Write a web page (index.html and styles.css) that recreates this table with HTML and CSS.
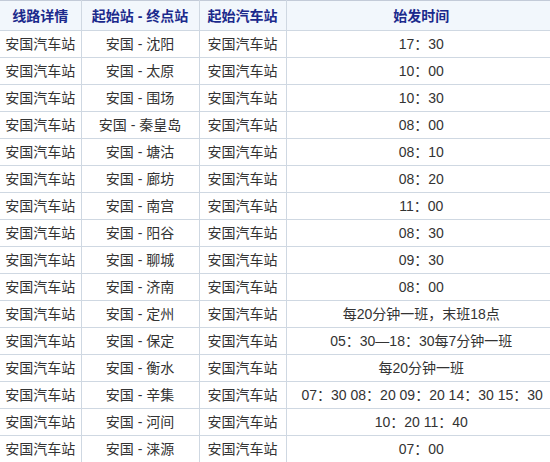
FILE: index.html
```html
<!DOCTYPE html>
<html lang="zh-CN">
<head>
<meta charset="utf-8">
<title>线路详情</title>
<link rel="stylesheet" href="styles.css">
</head>
<body>
<table class="lines">
  <colgroup>
    <col class="c1"><col class="c2"><col class="c3"><col class="c4">
  </colgroup>
  <thead>
    <tr><th>线路详情</th><th>起始站 - 终点站</th><th>起始汽车站</th><th class="time">始发时间</th></tr>
  </thead>
  <tbody>
    <tr><td>安国汽车站</td><td>安国 - 沈阳</td><td>安国汽车站</td><td class="time">17：30</td></tr>
    <tr><td>安国汽车站</td><td>安国 - 太原</td><td>安国汽车站</td><td class="time">10：00</td></tr>
    <tr><td>安国汽车站</td><td>安国 - 围场</td><td>安国汽车站</td><td class="time">10：30</td></tr>
    <tr><td>安国汽车站</td><td>安国 - 秦皇岛</td><td>安国汽车站</td><td class="time">08：00</td></tr>
    <tr><td>安国汽车站</td><td>安国 - 塘沽</td><td>安国汽车站</td><td class="time">08：10</td></tr>
    <tr><td>安国汽车站</td><td>安国 - 廊坊</td><td>安国汽车站</td><td class="time">08：20</td></tr>
    <tr><td>安国汽车站</td><td>安国 - 南宫</td><td>安国汽车站</td><td class="time">11：00</td></tr>
    <tr><td>安国汽车站</td><td>安国 - 阳谷</td><td>安国汽车站</td><td class="time">08：30</td></tr>
    <tr><td>安国汽车站</td><td>安国 - 聊城</td><td>安国汽车站</td><td class="time">09：30</td></tr>
    <tr><td>安国汽车站</td><td>安国 - 济南</td><td>安国汽车站</td><td class="time">08：00</td></tr>
    <tr><td>安国汽车站</td><td>安国 - 定州</td><td>安国汽车站</td><td class="time">每20分钟一班，末班18点</td></tr>
    <tr><td>安国汽车站</td><td>安国 - 保定</td><td>安国汽车站</td><td class="time">05：30—18：30每7分钟一班</td></tr>
    <tr><td>安国汽车站</td><td>安国 - 衡水</td><td>安国汽车站</td><td class="time">每20分钟一班</td></tr>
    <tr><td>安国汽车站</td><td>安国 - 辛集</td><td>安国汽车站</td><td class="time">07：30 08：20 09：20 14：30 15：30</td></tr>
    <tr><td>安国汽车站</td><td>安国 - 河间</td><td>安国汽车站</td><td class="time">10：20 11：40</td></tr>
    <tr><td>安国汽车站</td><td>安国 - 涞源</td><td>安国汽车站</td><td class="time">07：00</td></tr>
  </tbody>
</table>
</body>
</html>
```

FILE: styles.css
```css
html, body {
  margin: 0;
  padding: 0;
  background: #ffffff;
  overflow: hidden;
}
body {
  width: 550px;
  height: 462px;
  font-family: "Liberation Sans", "Noto Sans CJK SC", sans-serif;
  font-size: 14px;
  color: #333333;
}
.lines {
  border-collapse: collapse;
  table-layout: fixed;
  width: 556px;
}
.c1 { width: 81px; }
.c2 { width: 118px; }
.c3 { width: 87px; }
.c4 { width: 270px; }
.lines th,
.lines td {
  border: 1px solid #cfd8e2;
  text-align: center;
  white-space: nowrap;
  overflow: visible;
  padding: 0 3px;
  line-height: 18px;
}
.lines tr > :first-child { border-left: none; }
.lines tr > :last-child { border-right: none; }
.lines tbody tr:last-child td { border-bottom: none; }
.lines th {
  height: 29px;
  background: #f2f7fc;
  color: #1b2a8c;
  font-weight: bold;
  border-top-color: #c3cbd8;
}
.lines td {
  height: 26px;
}
.lines .time {
  padding: 0 15px;
}
```
